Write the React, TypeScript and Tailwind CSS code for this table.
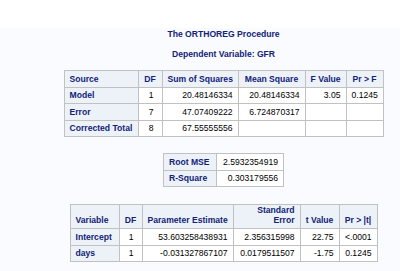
import React from "react";

const th = "bg-[#edf2f9] text-[#112277] font-bold border border-[#c1c1c1] px-[5px] h-[16.5px] py-0 leading-[10px] whitespace-nowrap";
const td = "bg-white text-black border border-[#c1c1c1] px-[5px] h-[16.5px] py-0 leading-[10px] text-right whitespace-nowrap";

const anova = [
  ["Model", "1", "20.48146334", "20.48146334", "3.05", "0.1245"],
  ["Error", "7", "47.07409222", "6.724870317", "", ""],
  ["Corrected Total", "8", "67.55555556", "", "", ""],
];

const params = [
  ["Intercept", "1", "53.603258438931", "2.356315998", "22.75", "<.0001"],
  ["days", "1", "-0.031327867107", "0.0179511507", "-1.75", "0.1245"],
];

export default function App() {
  return (
    <div className="w-[400px] h-[271px] overflow-hidden bg-white font-['Liberation_Sans',Arial,sans-serif] text-[8.6px]">
      <div className="mt-[28px] h-[243px] bg-[#fafbfe] pl-[47px]">
        <div className="flex flex-col items-center">
          <div className="leading-[12px] font-bold text-[#112277]">The ORTHOREG Procedure</div>
          <div className="mt-[8px] leading-[12px] font-bold text-[#112277]">Dependent Variable: GFR</div>

          <table className="mt-[10px] border-collapse border border-[#c1c1c1] table-fixed w-[319px]">
            <colgroup>
              <col className="w-[74px]" />
              <col className="w-[24px]" />
              <col className="w-[76px]" />
              <col className="w-[67px]" />
              <col className="w-[41px]" />
              <col className="w-[37px]" />
            </colgroup>
            <thead>
              <tr>
                <th className={`${th} text-left`}>Source</th>
                <th className={`${th} text-center`}>DF</th>
                <th className={`${th} text-center`}>Sum of Squares</th>
                <th className={`${th} text-center`}>Mean Square</th>
                <th className={`${th} text-center`}>F Value</th>
                <th className={`${th} text-center`}>Pr &gt; F</th>
              </tr>
            </thead>
            <tbody>
              {anova.map((r) => (
                <tr key={r[0]}>
                  <th className={`${th} text-left`}>{r[0]}</th>
                  <td className={`${td} pr-[8px]`}>{r[1]}</td>
                  <td className={td}>{r[2]}</td>
                  <td className={td}>{r[3]}</td>
                  <td className={td}>{r[4]}</td>
                  <td className={td}>{r[5]}</td>
                </tr>
              ))}
            </tbody>
          </table>

          <table className="mt-[16px] border-collapse border border-[#c1c1c1] table-fixed w-[120px]">
            <colgroup>
              <col className="w-[53px]" />
              <col className="w-[67px]" />
            </colgroup>
            <tbody>
              <tr>
                <th className={`${th} text-left`}>Root MSE</th>
                <td className={td}>2.5932354919</td>
              </tr>
              <tr>
                <th className={`${th} text-left`}>R-Square</th>
                <td className={td}>0.303179556</td>
              </tr>
            </tbody>
          </table>

          <table className="mt-[17px] border-collapse border border-[#c1c1c1] table-fixed w-[307px]">
            <colgroup>
              <col className="w-[49px]" />
              <col className="w-[23px]" />
              <col className="w-[91px]" />
              <col className="w-[67px]" />
              <col className="w-[39px]" />
              <col className="w-[38px]" />
            </colgroup>
            <thead>
              <tr>
                <th className={`${th} text-left align-bottom h-[24px] pb-[3px]`}>Variable</th>
                <th className={`${th} text-center align-bottom pb-[3px]`}>DF</th>
                <th className={`${th} text-center align-bottom pb-[3px]`}>Parameter Estimate</th>
                <th className={`${th} text-right align-bottom pb-[3px]`}>
                  Standard
                  <br />
                  Error
                </th>
                <th className={`${th} text-center align-bottom pb-[3px]`}>t Value</th>
                <th className={`${th} text-center align-bottom pb-[3px]`}>Pr &gt; |t|</th>
              </tr>
            </thead>
            <tbody>
              {params.map((r) => (
                <tr key={r[0]}>
                  <th className={`${th} text-left`}>{r[0]}</th>
                  <td className={`${td} pr-[8px]`}>{r[1]}</td>
                  <td className={td}>{r[2]}</td>
                  <td className={td}>{r[3]}</td>
                  <td className={td}>{r[4]}</td>
                  <td className={td}>{r[5]}</td>
                </tr>
              ))}
            </tbody>
          </table>
        </div>
      </div>
    </div>
  );
}
